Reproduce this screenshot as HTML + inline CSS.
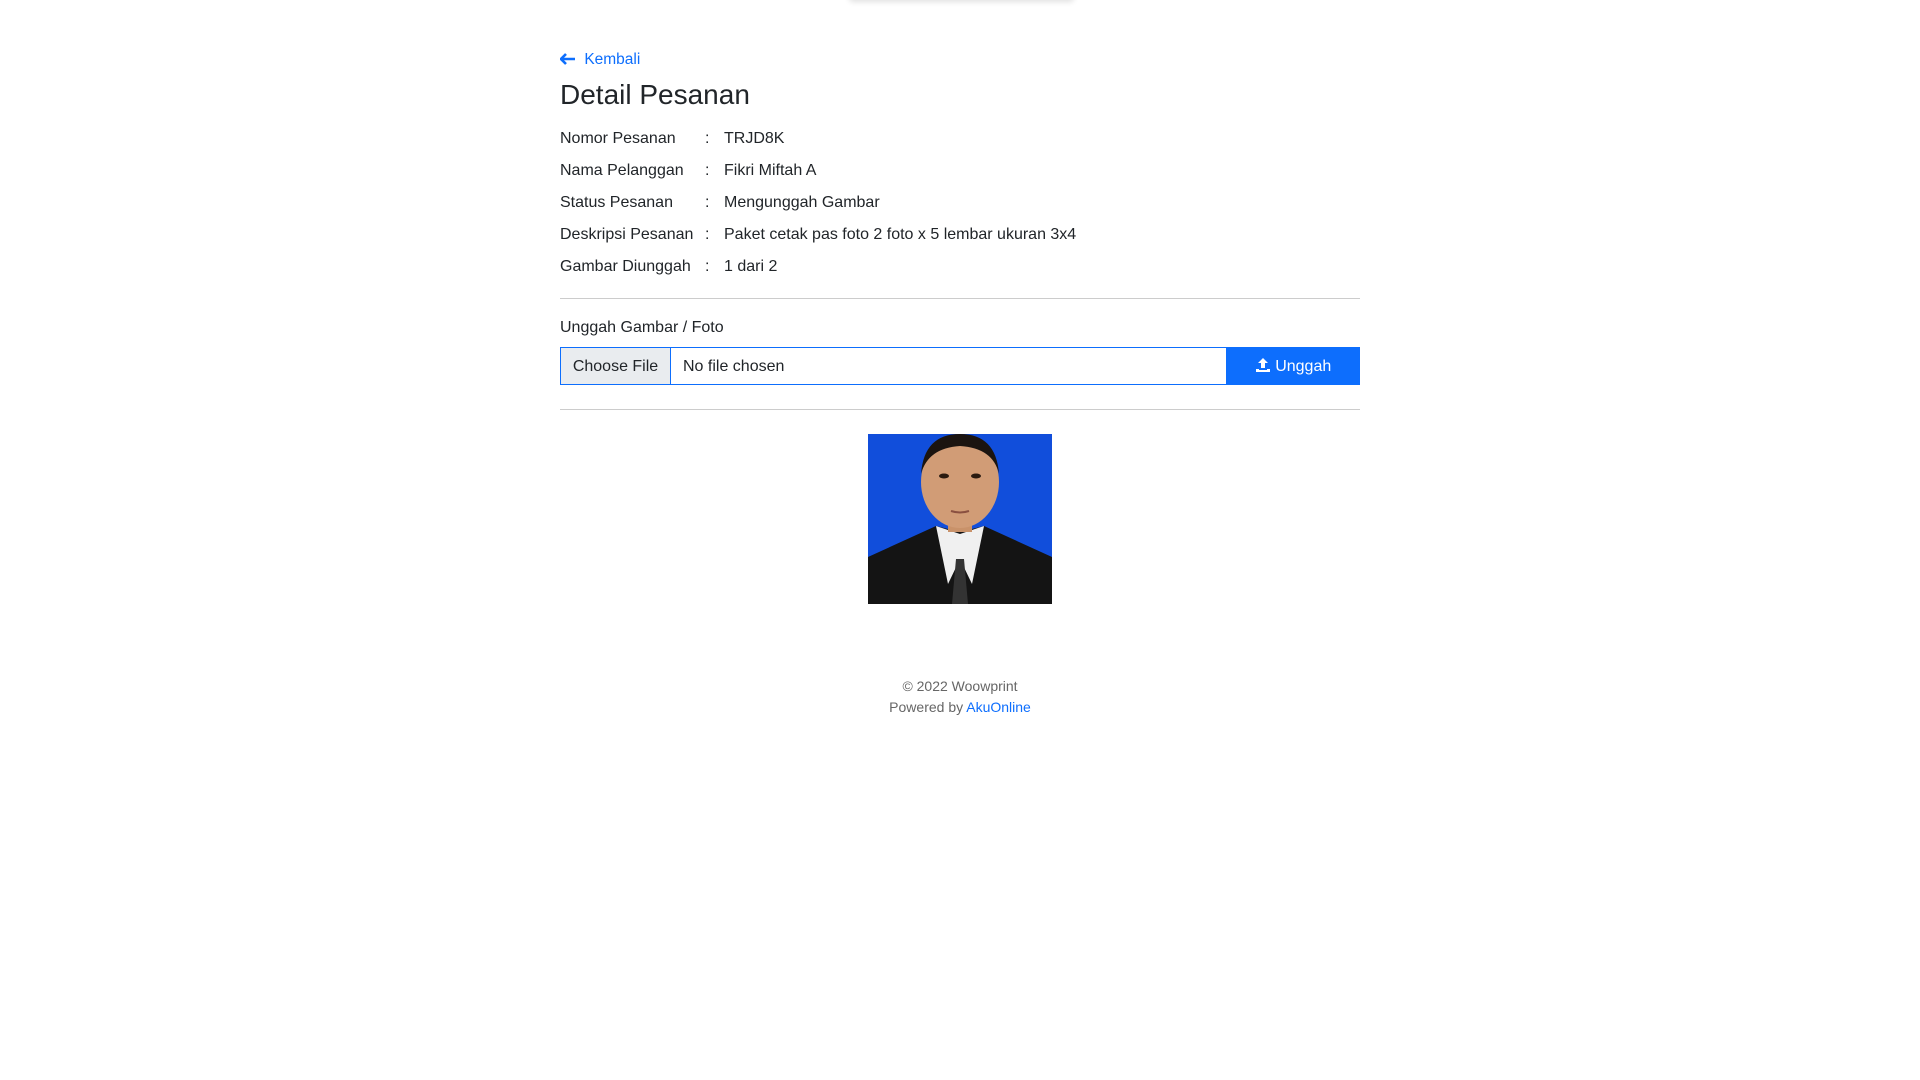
<!DOCTYPE html>
<html><head><meta charset="utf-8"><style>
body{margin:0;background:#fff;font-family:"Liberation Sans",sans-serif;color:#212529;}
.c{position:absolute;left:560px;width:800px;}
.topsh{position:absolute;left:849px;top:-10px;width:225px;height:10px;box-shadow:0 2px 6px rgba(0,0,0,.12);border-radius:4px;}
a{color:#0d6efd;text-decoration:none}
.row{position:absolute;left:0;font-size:16px;line-height:20px}
.row span{position:absolute;white-space:nowrap}
hr{position:absolute;left:0;width:800px;margin:0;border:0;border-top:1px solid #ccc}
</style></head><body>
<div class="topsh"></div>
<div class="c" style="top:0">
 <div style="position:absolute;top:51px;font-size:15.5px;color:#0d6efd;white-space:nowrap">
  <svg width="16" height="12" viewBox="0 0 16 12" style="vertical-align:-1px"><path d="M6 1 L1 6 L6 11 M1 6 H15" stroke="#0d6efd" stroke-width="2.6" fill="none"/></svg>
  <span style="margin-left:4px">Kembali</span></div>
 <div style="position:absolute;top:79px;font-size:28px;white-space:nowrap">Detail Pesanan</div>
 <div class="row" style="top:129px"><span>Nomor Pesanan</span><span style="left:145px">:</span><span style="left:164px">TRJD8K</span></div>
 <div class="row" style="top:161px"><span>Nama Pelanggan</span><span style="left:145px">:</span><span style="left:164px">Fikri Miftah A</span></div>
 <div class="row" style="top:193px"><span>Status Pesanan</span><span style="left:145px">:</span><span style="left:164px">Mengunggah Gambar</span></div>
 <div class="row" style="top:225px"><span>Deskripsi Pesanan</span><span style="left:145px">:</span><span style="left:164px">Paket cetak pas foto 2 foto x 5 lembar ukuran 3x4</span></div>
 <div class="row" style="top:257px"><span>Gambar Diunggah</span><span style="left:145px">:</span><span style="left:164px">1 dari 2</span></div>
 <hr style="top:298px">
 <div class="row" style="top:318px"><span>Unggah Gambar / Foto</span></div>
 <div style="position:absolute;top:347px;left:0;width:666px;height:36px;border:1px solid #0d6efd;font-size:16px">
  <div style="position:absolute;left:0;top:0;width:109px;height:36px;background:#e9ecef;border-right:1px solid #0d6efd;line-height:37px;text-align:center">Choose File</div>
  <div style="position:absolute;left:122px;top:0;line-height:37px">No file chosen</div>
 </div>
 <div style="position:absolute;top:347px;left:666px;width:134px;height:38px;background:#0d6efd;color:#fff;font-size:16px;line-height:39px;text-align:center">
  <svg width="16" height="16" viewBox="0 0 16 16" style="vertical-align:-2px"><path d="M8 1 L3 6 H6 V11 H10 V6 H13 Z M1 12 H4 V13 H12 V12 H15 V15 H1 Z" fill="#fff"/></svg> Unggah</div>
 <hr style="top:409px">
</div>
<svg style="position:absolute;left:868px;top:434px" width="184" height="170" viewBox="0 0 184 170">
 <rect width="184" height="170" fill="#114edb"/>
 <path d="M0 123 L68 92 L92 98 L116 92 L184 123 V170 H0Z" fill="#141414"/>
 <path d="M68 92 L80 150 L92 125 L104 150 L116 92 L92 100Z" fill="#f0f0f0"/>
 <path d="M88 125 L96 125 L100 170 L84 170Z" fill="#333"/>
 <rect x="80" y="70" width="24" height="28" fill="#c9926a"/>
 <ellipse cx="92" cy="48" rx="39" ry="46" fill="#d19c76"/>
 <path d="M53 40 Q56 0 92 0 Q128 0 131 40 Q125 14 92 12 Q60 14 53 40Z" fill="#1b1410"/>
 <ellipse cx="76" cy="42" rx="5" ry="2.5" fill="#2a1a10"/><ellipse cx="108" cy="42" rx="5" ry="2.5" fill="#2a1a10"/>
 <path d="M83 77 Q92 80 101 77" stroke="#8a5040" stroke-width="2" fill="none"/>
</svg>
<div style="position:absolute;top:676px;left:0;width:1920px;text-align:center;font-size:14px;color:#666;line-height:21px">© 2022 Woowprint<br>Powered by <a href="#">AkuOnline</a></div>
</body></html>
